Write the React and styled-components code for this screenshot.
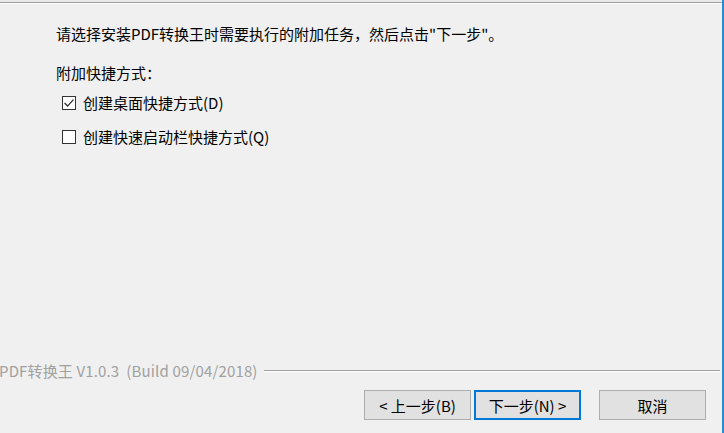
import React from "react";
import styled, { createGlobalStyle } from "styled-components";

const Global = createGlobalStyle`
    html, body {
        margin: 0;
        padding: 0;
        background: #f0f0f0;
    }
    body {
        font-family: "Noto Sans CJK SC", "Noto Sans", sans-serif;
        font-size: 15px;
        color: #000;
    }
`;

const Window = styled.div`
    width: 724px;
    height: 433px;
    box-sizing: border-box;
    display: flex;
    flex-direction: column;
    background: #f0f0f0;
    border-right: 2px solid #2b8ad8;
    overflow: hidden;
`;

const HeaderEdge = styled.div`
    height: 2px;
    background: #e9e9e9;
    border-bottom: 1px solid #a0a0a0;
    box-shadow: 0 1px 0 #ffffff;
`;

const Body = styled.div`
    flex: 1;
    display: flex;
    flex-direction: column;
    padding: 21px 0 0 56px;
`;

const Intro = styled.div`
    line-height: 20px;
    height: 20px;
`;

const GroupLabel = styled.div`
    line-height: 20px;
    margin-top: 19px;
`;

const Options = styled.div`
    display: flex;
    flex-direction: column;
    gap: 14px;
    margin-top: 10px;
    padding-left: 6px;
`;

const Option = styled.label`
    display: flex;
    align-items: center;
    gap: 7px;
    line-height: 20px;
`;

const Box = styled.span`
    width: 14px;
    height: 14px;
    box-sizing: border-box;
    border: 1px solid #333333;
    background: #ffffff;
    display: flex;
    align-items: center;
    justify-content: center;
`;

const BrandRow = styled.div`
    display: flex;
    align-items: center;
    gap: 6px;
    padding-right: 2px;
    height: 20px;
`;

const Brand = styled.span`
    color: #a0a0a0;
    font-size: 15px;
    white-space: pre;
    letter-spacing: 0.15px;
    margin-left: -1px;
`;

const Rule = styled.div`
    flex: 1;
    height: 1px;
    background: #a0a0a0;
    box-shadow: 0 1px 0 #ffffff;
`;

const ButtonRow = styled.div`
    display: flex;
    justify-content: flex-end;
    align-items: center;
    padding: 10px 16px 13px 0;
`;

const Button = styled.button`
    width: 107px;
    height: 30px;
    box-sizing: border-box;
    margin-left: ${p => p.gap}px;
    font-family: inherit;
    font-size: 15px;
    color: #000;
    background: #e1e1e1;
    border: ${p => (p.primary ? "2px solid #0078d7" : "1px solid #adadad")};
    padding: 0;
    display: flex;
    align-items: center;
    justify-content: center;
`;

const Check = () => (
    <svg width="12" height="12" viewBox="0 0 12 12">
        <path d="M1.6 6.1 L4.6 9.1 L10.4 2.6" fill="none" stroke="#333" strokeWidth="1.4" />
    </svg>
);

const App = () => (
    <>
        <Global />
        <Window>
            <HeaderEdge />
            <Body>
                <Intro>请选择安装PDF转换王时需要执行的附加任务，然后点击"下一步"。</Intro>
                <GroupLabel>附加快捷方式：</GroupLabel>
                <Options>
                    <Option>
                        <Box><Check /></Box>
                        创建桌面快捷方式(D)
                    </Option>
                    <Option>
                        <Box />
                        创建快速启动栏快捷方式(Q)
                    </Option>
                </Options>
            </Body>
            <BrandRow>
                <Brand>PDF转换王 V1.0.3  (Build 09/04/2018)</Brand>
                <Rule />
            </BrandRow>
            <ButtonRow>
                <Button gap={0}>&lt; 上一步(B)</Button>
                <Button gap={3} primary>下一步(N) &gt;</Button>
                <Button gap={18}>取消</Button>
            </ButtonRow>
        </Window>
    </>
);

export default App;
